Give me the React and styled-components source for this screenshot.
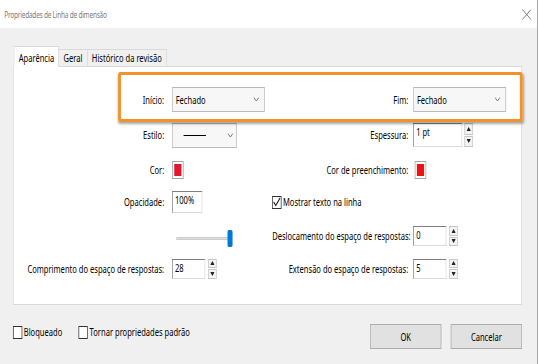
import React from 'react';
import styled, { createGlobalStyle } from 'styled-components';

// the reference dialog is a horizontally squeezed screenshot
const SQUEEZE = 0.72;

const GlobalStyle = createGlobalStyle`
  * { box-sizing: border-box; }
  html, body { margin: 0; padding: 0; background: #f0f0f0; }
  body {
    font-family: "Noto Sans", "Liberation Sans", sans-serif;
    font-size: 10.5px;
    color: #000;
    overflow: hidden;
  }
`;

const Viewport = styled.div`
  width: 538px;
  height: 364px;
  overflow: hidden;
  border-right: 1px solid #a9a9a9;
`;

const Dialog = styled.div`
  position: relative;
  width: 746px;
  height: 364px;
  transform: scaleX(${SQUEEZE});
  transform-origin: 0 0;
  display: flex;
  flex-direction: column;
  background: #f0f0f0;
`;

const TitleBar = styled.div`
  flex: none;
  height: 28px;
  background: #fff;
  display: flex;
  align-items: center;
  justify-content: space-between;
  padding: 0 8px 0 6px;
  color: #7c7c7c;
  font-size: 9px;
  letter-spacing: -0.3px;
`;

const Body = styled.div`
  padding: 18px 21px 0 18px;
  display: flex;
  flex-direction: column;
`;

const TabStrip = styled.div`
  display: flex;
  align-items: flex-end;
  height: 21px;
  margin-bottom: -1px;
  position: relative;
  z-index: 1;
`;

const Tab = styled.div`
  height: ${(p) => (p.$active ? 21 : 18)}px;
  padding: ${(p) => (p.$active ? '2px 6px 0' : '0 6px')};
  margin-left: ${(p) => (p.$active ? 1 : -1)}px;
  display: flex;
  align-items: center;
  background: ${(p) => (p.$active ? '#fff' : '#f0f0f0')};
  border: 1px solid #d9d9d9;
  border-bottom-color: ${(p) => (p.$active ? '#fff' : '#d9d9d9')};
`;

const Panel = styled.div`
  height: 239px;
  background: #fff;
  border: 1px solid #d9d9d9;
  padding-top: 20px;
  display: grid;
  grid-template-columns: 220px 139px 196px 1fr;
  grid-template-rows: 25px 46px 24px 40px 28px 37px;
  align-items: center;
  align-content: start;
`;

const Label = styled.div`
  text-align: right;
  padding-right: ${(p) => p.$gap}px;
  white-space: nowrap;
`;

const Cell = styled.div`
  display: flex;
  align-items: center;
  grid-column: ${(p) => p.$span || 'auto'};
  padding-left: ${(p) => p.$indent || 0}px;
`;

const Combo = styled.div`
  width: ${(p) => p.$w}px;
  height: 25px;
  display: flex;
  align-items: center;
  justify-content: space-between;
  padding: 0 ${(p) => p.$arrowPad}px 0 4px;
  background: #f7f7f7;
  border: 1px solid #bababa;
`;

const StrokeSample = styled.span`
  width: 31px;
  height: 1px;
  margin-left: 11px;
  background: #000;
`;

const SpinWrap = styled.div`
  display: flex;
  align-items: stretch;
  height: ${(p) => p.$h}px;
  gap: ${(p) => p.$gap}px;
`;

const Field = styled.div`
  width: ${(p) => p.$w}px;
  height: ${(p) => (p.$h ? `${p.$h}px` : 'auto')};
  background: #fff;
  border: 1px solid;
  border-color: #7f7f7f #dadada #dadada #7f7f7f;
  padding: 2px 0 0 3px;
  line-height: 1.3;
`;

const Spinner = styled.div`
  width: 12px;
  display: flex;
  flex-direction: column;
  gap: 1px;
`;

const SpinButton = styled.div`
  flex: 1;
  border: 1px solid #c6c6c6;
  background: #f3f3f3;
  display: flex;
  align-items: center;
  justify-content: center;
`;

const Swatch = styled.div`
  width: 16px;
  height: 18px;
  padding: 2px;
  border: 1px solid #a3a3a3;
  background: #fff;
  span {
    display: block;
    width: 100%;
    height: 100%;
    background: ${(p) => p.$color};
  }
`;

const Slider = styled.div`
  display: flex;
  align-items: center;
  margin-left: 6px;
  margin-top: 4px;
`;

const Track = styled.div`
  width: 75px;
  height: 3px;
  background: #dedede;
  border: 1px solid #cdcdcd;
`;

const Thumb = styled.div`
  width: 7px;
  height: 17px;
  margin-left: -4px;
  border-radius: 2px;
  background: #0078d7;
`;

const Check = styled.div`
  display: inline-flex;
  align-items: center;
  gap: 2px;
  white-space: nowrap;
`;

const Box = styled.span`
  width: 13px;
  height: 13px;
  border: 1px solid #333;
  background: #fff;
  display: flex;
  align-items: center;
  justify-content: center;
`;

const Footer = styled.div`
  display: flex;
  justify-content: space-between;
  align-items: flex-start;
`;

const Options = styled.div`
  display: flex;
  gap: 23px;
  margin-top: 20px;
`;

const Buttons = styled.div`
  display: flex;
  gap: 13px;
  margin-top: 19px;
`;

const Button = styled.button`
  width: 99px;
  height: 25px;
  padding: 0;
  font: inherit;
  color: #000;
  background: #e1e1e1;
  border: 1px solid #adadad;
`;

const Highlight = styled.div`
  position: absolute;
  left: 164px;
  top: 72px;
  width: 562px;
  height: 50px;
  border: 3px solid #f1922c;
  border-left-width: 4px;
  border-right-width: 4px;
  border-radius: 3px;
  box-shadow: 1px 2px 3px rgba(0, 0, 0, 0.35);
  pointer-events: none;
`;

const Chevron = () => (
  <svg width="8" height="5" viewBox="0 0 8 5">
    <path d="M0.5 0.5 L4 4 L7.5 0.5" fill="none" stroke="#6a6a6a" strokeWidth="1" />
  </svg>
);

const Arrow = ({ up }) => (
  <svg width="6" height="4" viewBox="0 0 6 4">
    <path d={up ? 'M0 4 L3 0 L6 4 Z' : 'M0 0 L3 4 L6 0 Z'} fill="#222" />
  </svg>
);

const CloseIcon = () => (
  <svg width="13" height="11" viewBox="0 0 13 11">
    <path d="M0.5 0.5 L12.5 10.5 M12.5 0.5 L0.5 10.5" stroke="#6b6b6b" strokeWidth="1" />
  </svg>
);

const CheckBox = ({ checked, children }) => (
  <Check>
    <Box>
      {checked && (
        <svg width="11" height="10" viewBox="0 0 11 10">
          <path d="M1 5 L4 8.5 L10 1" fill="none" stroke="#222" strokeWidth="1.3" />
        </svg>
      )}
    </Box>
    {children}
  </Check>
);

const SpinField = ({ value, w, h, gap = 4 }) => (
  <SpinWrap $h={h} $gap={gap}>
    <Field $w={w}>{value}</Field>
    <Spinner>
      <SpinButton><Arrow up /></SpinButton>
      <SpinButton><Arrow /></SpinButton>
    </Spinner>
  </SpinWrap>
);

const App = () => {
  return (
    <Viewport>
      <GlobalStyle />
      <Dialog>
        <TitleBar>
          <span>Propriedades de Linha de dimensão</span>
          <CloseIcon />
        </TitleBar>
        <Body>
          <TabStrip>
            <Tab $active>Aparência</Tab>
            <Tab>Geral</Tab>
            <Tab>Histórico da revisão</Tab>
          </TabStrip>
          <Panel>
            <Label $gap={11}>Início:</Label>
            <Cell>
              <Combo $w={129} $arrowPad={7}>Fechado<Chevron /></Combo>
            </Cell>
            <Label $gap={7}>Fim:</Label>
            <Cell>
              <Combo $w={129} $arrowPad={7}>Fechado<Chevron /></Combo>
            </Cell>

            <Label $gap={11}>Estilo:</Label>
            <Cell>
              <Combo $w={90} $arrowPad={4}><StrokeSample /><Chevron /></Combo>
            </Cell>
            <Label $gap={7}>Espessura:</Label>
            <Cell>
              <SpinField value="1 pt" w={68} h={24} gap={3} />
            </Cell>

            <Label $gap={11}>Cor:</Label>
            <Cell>
              <Swatch $color="#e2162f"><span /></Swatch>
            </Cell>
            <Label $gap={7}>Cor de preenchimento:</Label>
            <Cell $indent={2}>
              <Swatch $color="#ee1212"><span /></Swatch>
            </Cell>

            <Label $gap={11}>Opacidade:</Label>
            <Cell>
              <Field $w={42} $h={22}>100%</Field>
            </Cell>
            <Cell $span="span 2">
              <CheckBox checked>Mostrar texto na linha</CheckBox>
            </Cell>

            <div />
            <Cell>
              <Slider>
                <Track />
                <Thumb />
              </Slider>
            </Cell>
            <Label $gap={7}>Deslocamento do espaço de respostas:</Label>
            <Cell>
              <SpinField value="0" w={46} h={20} />
            </Cell>

            <Label $gap={11}>Comprimento do espaço de respostas:</Label>
            <Cell>
              <SpinField value="28" w={46} h={20} />
            </Cell>
            <Label $gap={7}>Extensão do espaço de respostas:</Label>
            <Cell>
              <SpinField value="5" w={46} h={20} />
            </Cell>
          </Panel>
          <Footer>
            <Options>
              <CheckBox>Bloqueado</CheckBox>
              <CheckBox>Tornar propriedades padrão</CheckBox>
            </Options>
            <Buttons>
              <Button>OK</Button>
              <Button>Cancelar</Button>
            </Buttons>
          </Footer>
        </Body>
        <Highlight />
      </Dialog>
    </Viewport>
  );
};

export default App;
